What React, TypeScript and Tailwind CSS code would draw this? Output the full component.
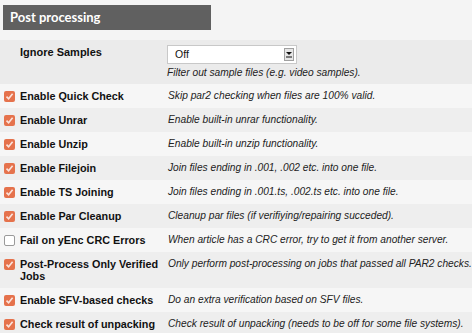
import React from "react";

const rows: { label: string; desc: string; checked: boolean }[] = [
  { label: "Enable Quick Check", desc: "Skip par2 checking when files are 100% valid.", checked: true },
  { label: "Enable Unrar", desc: "Enable built-in unrar functionality.", checked: true },
  { label: "Enable Unzip", desc: "Enable built-in unzip functionality.", checked: true },
  { label: "Enable Filejoin", desc: "Join files ending in .001, .002 etc. into one file.", checked: true },
  { label: "Enable TS Joining", desc: "Join files ending in .001.ts, .002.ts etc. into one file.", checked: true },
  { label: "Enable Par Cleanup", desc: "Cleanup par files (if verifiying/repairing succeded).", checked: true },
  { label: "Fail on yEnc CRC Errors", desc: "When article has a CRC error, try to get it from another server.", checked: false },
  { label: "Post-Process Only Verified Jobs", desc: "Only perform post-processing on jobs that passed all PAR2 checks.", checked: true },
  { label: "Enable SFV-based checks", desc: "Do an extra verification based on SFV files.", checked: true },
  { label: "Check result of unpacking", desc: "Check result of unpacking (needs to be off for some file systems).", checked: true },
];

function Box({ checked }: { checked: boolean }) {
  if (!checked) {
    return <span className="mt-[1px] block h-[11px] w-[11px] shrink-0 rounded-[2px] border border-[#9a9a9a] bg-white" />;
  }
  return (
    <span className="mt-[1px] flex h-[11px] w-[11px] shrink-0 items-center justify-center rounded-[2px] bg-[#e5724c]">
      <svg width="9" height="9" viewBox="0 0 9 9">
        <path d="M1.5 4.6 L3.6 6.8 L7.6 1.8" fill="none" stroke="#fbe3dc" strokeWidth="1.6" />
      </svg>
    </span>
  );
}

export default function App() {
  return (
    <div className="w-[474px] h-[333px] overflow-hidden bg-white" style={{ fontFamily: '"Liberation Sans", Arial, sans-serif' }}>
      <div className="w-[472px] h-[333px] bg-[#f4f4f4] pt-[5px]">
        <div className="ml-[3px] w-[208px] h-[25px] bg-[#606060] flex items-center pl-[7px]">
          <span className="text-white text-[13px] font-bold" style={{ fontFamily: 'Lato, "Open Sans", sans-serif' }}>
            Post processing
          </span>
        </div>
        <div className="mt-[10px] h-[44px] bg-[#ebebeb] flex">
          <div className="w-[167px] pl-[20px] pt-[6px] text-[11px] font-bold text-[#111] leading-[12px]">Ignore Samples</div>
          <div className="flex flex-col pt-[5px]">
            <div className="w-[130px] h-[19px] bg-white border border-[#c8c8c8] flex items-center justify-between pl-[7px] pr-[2px]">
              <span className="text-[10.5px] text-[#111]">Off</span>
              <span className="w-[10px] h-[13px] bg-[#e6e6e6] border border-[#a0a0a0] flex flex-col items-center justify-center">
                <svg width="6" height="7" viewBox="0 0 6 7">
                  <path d="M0 1 L6 1 L3 4 Z" fill="#111" />
                  <rect x="0" y="5.5" width="6" height="1" fill="#111" />
                </svg>
              </span>
            </div>
            <div className="mt-[3px] text-[10.2px] italic text-[#222] leading-[12px]">Filter out sample files (e.g. video samples).</div>
          </div>
        </div>
        {rows.map((r, i) => (
          <div key={r.label} className={`flex ${i % 2 === 0 ? "bg-[#f6f6f6]" : "bg-[#eeeeee]"} py-[6px]`}>
            <div className="w-[168px] flex pl-[4px] gap-[5px]">
              <Box checked={r.checked} />
              <span className="text-[10.8px] font-bold text-[#111] leading-[12px] w-[150px]">{r.label}</span>
            </div>
            <div className="text-[10.2px] italic text-[#222] leading-[12px] whitespace-nowrap">{r.desc}</div>
          </div>
        ))}
      </div>
    </div>
  );
}
